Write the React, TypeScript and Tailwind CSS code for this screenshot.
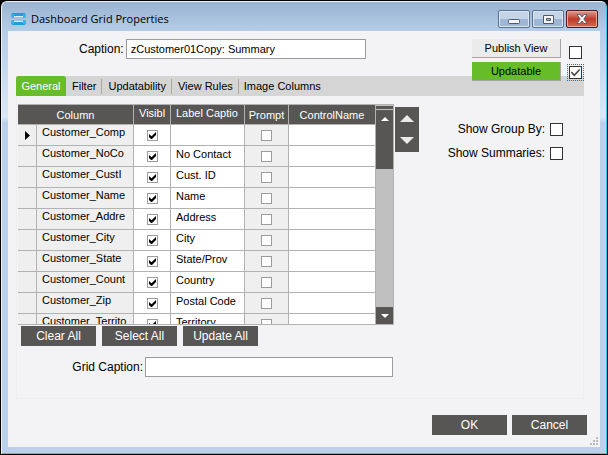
import React, { useState } from "react";

type Row = { column: string; label: string };

const rows: Row[] = [
  { column: "Customer_Comp", label: "" },
  { column: "Customer_NoCo", label: "No Contact" },
  { column: "Customer_CustI", label: "Cust. ID" },
  { column: "Customer_Name", label: "Name" },
  { column: "Customer_Addre", label: "Address" },
  { column: "Customer_City", label: "City" },
  { column: "Customer_State", label: "State/Prov" },
  { column: "Customer_Count", label: "Country" },
  { column: "Customer_Zip", label: "Postal Code" },
  { column: "Customer_Territo", label: "Territory" },
];

const tabs = ["General", "Filter", "Updatability", "View Rules", "Image Columns"];

function Check({
  label,
  id,
  size = "small",
  checked = false,
}: {
  label?: string;
  id?: string;
  size?: "small" | "large";
  checked?: boolean;
}) {
  const [on, setOn] = useState(checked);
  const box =
    size === "small"
      ? "size-[11px] border-[#9c9c9c]"
      : "size-[13px] border-[#333333]";
  return (
    <span className="relative inline-grid shrink-0">
      <input
        id={id}
        type="checkbox"
        aria-label={label}
        checked={on}
        onChange={() => setOn(!on)}
        className={`${box} block appearance-none border bg-white`}
      />
      {on && (
        <svg
          viewBox="0 0 11 11"
          className="pointer-events-none absolute inset-0 size-full"
          aria-hidden="true"
        >
          {size === "small" ? (
            <path d="M2 4v3l2 2h1l4-4V2L4.500 6.200z" fill="#000" />
          ) : (
            <path d="M2 5.200l2.500 2.600L9 3" fill="none" stroke="#4a4a4a" strokeWidth="1.400" />
          )}
        </svg>
      )}
    </span>
  );
}

function DarkButton({ children }: { children: React.ReactNode }) {
  return (
    <button type="button" className="h-5 w-[75px] bg-[#575654] text-xs leading-5 text-white">
      {children}
    </button>
  );
}

function Triangle({ down = false, className }: { down?: boolean; className: string }) {
  return (
    <svg viewBox="0 0 14 7" className={className} aria-hidden="true">
      <path d={down ? "M0 0h14L7 7z" : "M7 0l7 7H0z"} fill="currentColor" />
    </svg>
  );
}

function TitleBar() {
  return (
    <header className="flex h-[29px] items-start justify-between pr-[2px] pl-[3px]">
      <div className="flex items-center gap-[5px] pt-[9px]">
        <svg viewBox="0 0 15 12" className="h-3 w-[15px]" aria-hidden="true">
          <path d="M1 0h13v3H1z" fill="#1e9fd6" />
          <path d="M1 9h13v3H1z" fill="#1e9fd6" />
          <path d="M0 1h3v4H1L0 4zM15 1h-3v4h2l1-1zM0 11h3V7H1L0 8zM15 11h-3V7h2l1 1z" fill="#35b4e5" />
          <path d="M3 3h9v1H3zM3 8h9v1H3z" fill="#d8f1fb" />
          <path d="M3 4h9v4H3z" fill="#a3bfdd" />
        </svg>
        <h1 className="font-['Open_Sans',sans-serif] text-[11px] leading-4 text-black">
          Dashboard Grid Properties
        </h1>
      </div>
      <div className="flex gap-[2px] pt-2">
        <button
          type="button"
          aria-label="Minimize"
          className="grid h-[18px] w-8 place-items-center rounded-[2px] border border-[#5b7189] bg-linear-to-b from-[#c3d4e7] from-50% to-[#9db7d4] to-50% inset-ring inset-ring-[#d9e6f3]"
        >
          <svg viewBox="0 0 12 5" className="mt-1 h-[5px] w-3" aria-hidden="true">
            <rect x=".5" y=".5" width="11" height="4" rx="1" fill="#f5f5f5" stroke="#535866" />
          </svg>
        </button>
        <button
          type="button"
          aria-label="Maximize"
          className="grid h-[18px] w-8 place-items-center rounded-[2px] border border-[#5b7189] bg-linear-to-b from-[#c3d4e7] from-50% to-[#9db7d4] to-50% inset-ring inset-ring-[#d9e6f3]"
        >
          <svg viewBox="0 0 11 9" className="h-[9px] w-[11px]" aria-hidden="true">
            <path
              d="M.5.5h10v8H.5zM3.500 3.500h4v2h-4z"
              fill="#f5f5f5"
              fillRule="evenodd"
              stroke="#535866"
            />
          </svg>
        </button>
        <button
          type="button"
          aria-label="Close"
          className="grid h-[18px] w-8 place-items-center rounded-[2px] border border-[#4e1a1d] bg-linear-to-b from-[#dd9a8e] from-0% via-[#c0392b] via-50% to-[#cf6a4c] inset-ring inset-ring-[#e5a99d]"
        >
          <svg viewBox="0 0 12 10" className="h-[10px] w-3" aria-hidden="true">
            <path
              d="M1 .5h3l2 2.500 2-2.500h3L7.800 5 11 9.500H8L6 7 4 9.500H1L4.200 5z"
              fill="#f7f7f7"
              stroke="#535866"
              strokeWidth=".9"
            />
          </svg>
        </button>
      </div>
    </header>
  );
}

function ColumnGrid() {
  const head = "border-r border-b border-[#b2b2b2] p-0 font-normal";
  const cell = "border-r border-b border-[#b2b2b2] p-0 overflow-hidden whitespace-nowrap";
  return (
    <div className="flex h-[221px] w-[376px] overflow-hidden border-y border-r border-[#b2b2b2] bg-white">
      <div className="min-w-0 flex-1 overflow-hidden">
        <table className="w-full table-fixed border-separate border-spacing-0 text-[11px] leading-[14px]">
          <colgroup>
            <col className="w-[19px]" />
            <col className="w-[97px]" />
            <col className="w-[37px]" />
            <col className="w-[74px]" />
            <col className="w-11" />
            <col className="w-[87px]" />
          </colgroup>
          <thead>
            <tr className="h-5 bg-[#575654] text-white">
              <th colSpan={2} className={head}>Column</th>
              <th className={`${head} overflow-hidden pl-[5px] text-left align-top leading-4 whitespace-nowrap`}>Visibl</th>
              <th className={`${head} overflow-hidden pl-[5px] text-left align-top leading-4 whitespace-nowrap`}>Label Captio</th>
              <th className={head}>Prompt</th>
              <th className={head}>ControlName</th>
            </tr>
          </thead>
          <tbody>
            {rows.map((row, i) => (
              <tr key={row.column} className="h-[21px]">
                <td className={`${cell} bg-[#efefef]`}>
                  {i === 0 && (
                    <svg viewBox="0 0 5 9" className="ml-[7px] h-[9px] w-[5px]" aria-hidden="true">
                      <path d="M0 0l5 4.500L0 9z" fill="#000" />
                    </svg>
                  )}
                </td>
                <td className={`${cell} bg-[#efefef] pl-[5px] align-top`}>{row.column}</td>
                <td className={cell}>
                  <div className="flex justify-center">
                    <Check label={`${row.column} visible`} checked />
                  </div>
                </td>
                <td className={`${cell} pl-[5px] align-top leading-4`}>{row.label}</td>
                <td className={`${cell} bg-[#efefef]`}>
                  <div className="flex justify-center">
                    <Check label={`${row.column} prompt`} />
                  </div>
                </td>
                <td className={cell} />
              </tr>
            ))}
          </tbody>
        </table>
      </div>
      <div className="flex w-[17px] flex-col bg-[#c0c0c0] pt-px text-white">
        <div className="mb-px h-[3px] bg-[#575654]" />
        <button type="button" aria-label="Scroll up" className="grid h-[17px] place-items-center bg-[#575654]">
          <Triangle className="h-1 w-2" />
        </button>
        <div className="h-[42px] bg-[#575654]" />
        <button
          type="button"
          aria-label="Scroll down"
          className="mt-auto grid h-[17px] place-items-center bg-[#575654]"
        >
          <Triangle down className="h-1 w-2" />
        </button>
      </div>
    </div>
  );
}

export default function App() {
  const [caption, setCaption] = useState("zCustomer01Copy: Summary");
  const [gridCaption, setGridCaption] = useState("");

  return (
    <div className="flex min-h-screen bg-black p-px font-['Liberation_Sans',Arial,sans-serif] text-xs text-black">
      <div className="flex flex-1 flex-col rounded-t-md border border-t-[#eef4fa] border-r-[#35cdea] border-b-[#35cdea] border-l-[#eef4fa] bg-[linear-gradient(#99b4d1_0px,#b5cde8_30px,#dae8f6_115px,#b9d1ea_121px)] px-[6px] pb-[6px]">
        <TitleBar />

        <main className="flex flex-1 flex-col bg-[#f3f3f5] pr-4 pl-2">
          <div className="flex h-[45px] items-start justify-between pt-2">
            <div className="flex items-center gap-[2px] pl-[63px]">
              <label htmlFor="caption">Caption:</label>
              <input
                id="caption"
                value={caption}
                onChange={(e) => setCaption(e.target.value)}
                className="h-5 w-60 border border-[#9c9c9c] bg-white px-1 text-[11px]"
              />
            </div>
            <div className="relative z-10 flex gap-2 pr-[2px]">
              <div className="flex flex-col gap-1">
                <button
                  type="button"
                  className="h-[19px] w-[89px] border-r border-b border-[#a5a5a5] bg-[#ebebeb] text-[11px]"
                >
                  Publish View
                </button>
                <button
                  type="button"
                  className="h-[19px] w-[89px] border-r border-b border-[#a5a5a5] bg-[#66bc29] text-[11px]"
                >
                  Updatable
                </button>
              </div>
              <div className="flex flex-col gap-[7px] pt-[7px]">
                <Check label="Publish View" size="large" />
                <span className="inline-grid outline-1 outline-offset-1 outline-[#0078d7] outline-dotted">
                  <Check label="Updatable" size="large" checked />
                </span>
              </div>
            </div>
          </div>

          <div role="tablist" className="flex h-5 items-center bg-[#d5d5d5] text-[11px]">
            {tabs.map((tab, i) => (
              <button
                key={tab}
                type="button"
                role="tab"
                aria-selected={i === 0}
                className={
                  i === 0
                    ? "h-5 w-[50px] rounded-t-[3px] bg-[#66bc29] text-white"
                    : i === tabs.length - 1
                      ? "h-[15px] px-[5px] leading-[15px]"
                      : "h-[15px] border-r border-[#aca899] pr-[5px] pl-[6px] leading-[15px]"
                }
              >
                {tab}
              </button>
            ))}
          </div>

          <section role="tabpanel" className="h-[303px] border border-t-0 border-[#eeeef0] px-px pt-2">
            <div className="flex items-start justify-between">
              <div className="flex items-start gap-px">
                <ColumnGrid />
                <div className="mt-[3px] flex w-6 flex-col bg-[#575654] text-[#ebebeb]">
                  <button type="button" aria-label="Move up" className="grid h-[22px] place-items-center">
                    <Triangle className="h-[7px] w-[14px]" />
                  </button>
                  <button type="button" aria-label="Move down" className="grid h-[23px] place-items-center">
                    <Triangle down className="h-[7px] w-[14px]" />
                  </button>
                </div>
              </div>
              <div className="flex flex-col items-end gap-2 pt-[17px] pr-[19px]">
                <div className="flex items-center gap-[5px]">
                  <label htmlFor="group-by">Show Group By:</label>
                  <Check id="group-by" size="large" />
                </div>
                <div className="flex items-center gap-[5px]">
                  <label htmlFor="summaries">Show Summaries:</label>
                  <Check id="summaries" size="large" />
                </div>
              </div>
            </div>
            <div className="mt-px flex gap-[6px] pl-[3px]">
              <DarkButton>Clear All</DarkButton>
              <DarkButton>Select All</DarkButton>
              <DarkButton>Update All</DarkButton>
            </div>
            <div className="mt-[11px] flex w-[375px] items-center justify-end gap-[2px]">
              <label htmlFor="grid-caption">Grid Caption:</label>
              <input
                id="grid-caption"
                value={gridCaption}
                onChange={(e) => setGridCaption(e.target.value)}
                className="h-5 w-62 border border-[#9c9c9c] bg-white px-1 text-[11px]"
              />
            </div>
          </section>

          <footer className="mt-auto -mr-4 flex items-end justify-end gap-[3px] pr-[2px] pb-[2px]">
            <div className="flex gap-[5px] pb-[10px]">
              <DarkButton>OK</DarkButton>
              <DarkButton>Cancel</DarkButton>
            </div>
            <svg viewBox="0 0 8 8" className="size-2" fill="#bcbcbc" aria-hidden="true">
              <path d="M0 6h2v2H0zM3 6h2v2H3zM6 6h2v2H6zM3 3h2v2H3zM6 3h2v2H6zM6 0h2v2H6z" />
            </svg>
          </footer>
        </main>
      </div>
    </div>
  );
}
